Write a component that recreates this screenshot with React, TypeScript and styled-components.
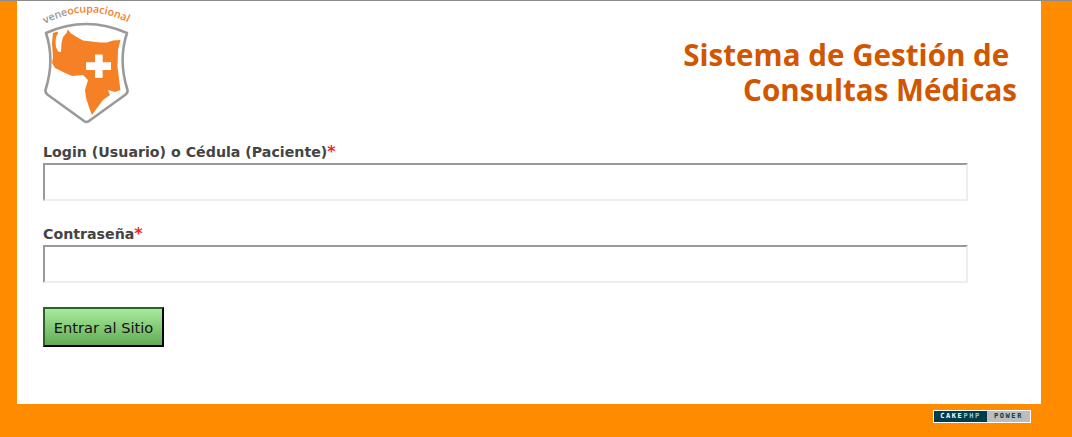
import { FC } from "react";
import styled, { createGlobalStyle } from "styled-components";

const GlobalStyle = createGlobalStyle`
  html, body {
    margin: 0;
    padding: 0;
  }
  body {
    background: #ff8c00;
    font-family: "DejaVu Sans", sans-serif;
  }
`;

const Page = styled.div`
  height: 437px;
  border-top: 1px solid #8c8c8c;
  box-sizing: border-box;
  overflow: hidden;
`;

const Content = styled.main`
  height: 403px;
  margin: 0 31px 0 17px;
  padding: 0 24px 0 26px;
  box-sizing: border-box;
  background: #fff;
`;

const Header = styled.header`
  display: flex;
  justify-content: space-between;
  height: 143px;
`;

const Logo = styled.svg`
  display: block;
  margin-left: -4px;
  overflow: visible;
`;

const Title = styled.h1`
  margin: 36px 0 0;
  font-family: "Open Sans", sans-serif;
  font-size: 29.6px;
  font-weight: 700;
  line-height: 35px;
  text-align: right;
  color: #d15600;
  white-space: pre-line;
`;

const Field = styled.div`
  width: 925px;

  & + & {
    margin-top: 25px;
  }
`;

const Label = styled.label`
  display: block;
  height: 19px;
  font-size: 14.2px;
  font-weight: 700;
  line-height: 17px;
  color: #444;
`;

const Required = styled.span`
  font-size: 16px;
  line-height: 1px;
  color: #f22;
`;

const Input = styled.input`
  display: block;
  width: 100%;
  height: 38px;
  box-sizing: border-box;
  border-style: solid;
  border-width: 2px;
  border-color: #999 #eee #eee #999;
  background: #fff;
`;

const Submit = styled.button`
  display: block;
  width: 121px;
  height: 40px;
  margin-top: 24px;
  padding: 0;
  border-style: solid;
  border-width: 2px;
  border-color: #2d6324 #000 #000 #2d6324;
  background: linear-gradient(#a8ea9c, #62ab55);
  font-family: "DejaVu Sans", sans-serif;
  font-size: 14.6px;
  color: #111;
`;

const Footer = styled.footer`
  display: flex;
  justify-content: flex-end;
  padding: 6px 41px 0 0;
`;

const PowerBadge = styled.div`
  display: flex;
  width: 98px;
  height: 13px;
  box-sizing: border-box;
  border: 1px solid #fff;
  font-family: "DejaVu Sans Mono", monospace;
  font-size: 7px;
  font-weight: 700;
  line-height: 11px;
  letter-spacing: 1.55px;
  text-align: center;
`;

const BadgeCake = styled.span`
  width: 53px;
  background: #003d4c;
  color: #fff;
`;

const BadgePhp = styled.span`
  color: #9fc3cc;
`;

const BadgePower = styled.span`
  flex: 1;
  background: #bdbdbd;
  color: #003d4c;
`;

const LogoMark: FC = () => (
  <Logo width="90" height="127" viewBox="39 1 90 127">
    <defs>
      <path id="logo-arc" d="M45 24 Q86 2 127 22 L145 34" />
    </defs>
    <text fontFamily="Open Sans, sans-serif" fontSize="10.6" fontWeight="600" fill="#999">
      <textPath href="#logo-arc">
        vene<tspan fill="#f58025">ocupacional</tspan>
      </textPath>
    </text>
    <path
      d="M46 33 Q86 15 127 33 Q118 60 127.5 90 Q128 93 125 95 L89 121 Q86.5 123 84 121 L48 95 Q45 93 45.5 90 Q55 60 46 33 Z"
      fill="#fff"
      stroke="#9a9a9a"
      strokeWidth="2.6"
      strokeLinejoin="round"
    />
    <path
      d="M53 33 L57.5 31.5 L58 33.5 L56 37 L55.5 42 L56 47 L58 51.5 L61 52 L61.5 43 L63 37 L66.5 33 L68 29.5 L70.5 33 L75 36 L83 40.5 L100 42.5 L107 42.5 L113 40.5 L120.5 40 L118 50 L117.5 67 L120 87 L120.5 90 L115 92 L108 90 L110 95 L103 100 L97 108 L92 115 L90 110 L86 98 L85 90 L88 80 L83 75 L72 76 L63 72 L55 68 L52 63 L53 57 L52 43 Z"
      fill="#f58025"
    />
    <path d="M95 54.5 H102.7 V62.3 H111 V70 H102.7 V77.7 H95 V70 H86 V62.3 H95 Z" fill="#fff" />
  </Logo>
);

const App: FC = () => {
  return (
    <Page>
      <GlobalStyle />
      <Content>
        <Header>
          <LogoMark />
          <Title>{"Sistema de Gestión de\u00a0\nConsultas Médicas"}</Title>
        </Header>
        <Field>
          <Label>
            Login (Usuario) o Cédula (Paciente)<Required>*</Required>
          </Label>
          <Input type="text" />
        </Field>
        <Field>
          <Label>
            Contraseña<Required>*</Required>
          </Label>
          <Input type="password" />
        </Field>
        <Submit type="button">Entrar al Sitio</Submit>
      </Content>
      <Footer>
        <PowerBadge>
          <BadgeCake>
            CAKE<BadgePhp>PHP</BadgePhp>
          </BadgeCake>
          <BadgePower>POWER</BadgePower>
        </PowerBadge>
      </Footer>
    </Page>
  );
};

export default App;
